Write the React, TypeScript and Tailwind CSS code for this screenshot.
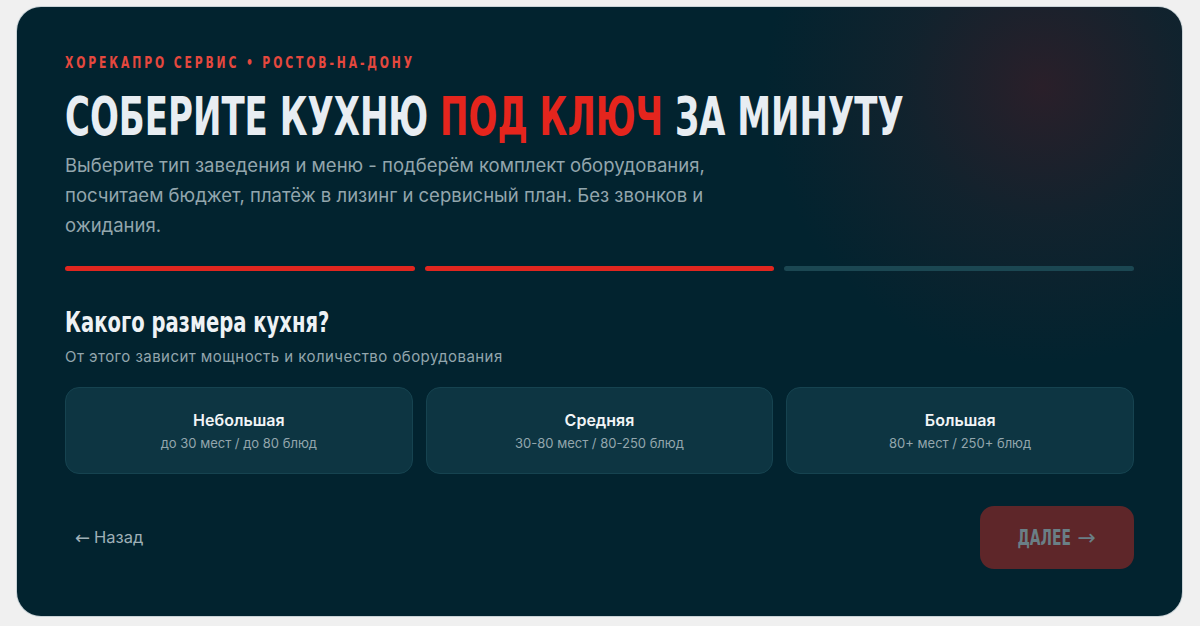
import { useState } from "react";

const sizes = [
  { title: "Небольшая", note: "до 30 мест / до 80 блюд" },
  { title: "Средняя", note: "30-80 мест / 80-250 блюд" },
  { title: "Большая", note: "80+ мест / 250+ блюд" },
];

const display = "font-['DejaVu_Sans_Condensed','Liberation_Sans_Narrow',sans-serif] font-bold";

export default function App() {
  const [selected, setSelected] = useState<number | null>(null);

  return (
    <main className="min-h-screen bg-[#f0f0f0] pl-[17px] pr-[18px] pt-[7px] pb-[10px] font-['Inter','Noto_Sans',sans-serif]">
      <section className="relative h-[609px] overflow-hidden rounded-[24px] bg-[#02232f] px-12 pt-12 shadow-[0_0_0_1px_#c9d2d6]">
        <div className="pointer-events-none absolute -right-[140px] -top-[200px] h-[560px] w-[560px] rounded-full bg-[radial-gradient(circle,rgba(52,30,40,0.8)_0%,rgba(32,34,44,0.5)_35%,rgba(2,35,47,0)_70%)]" />

        <div className="relative">
          <p className={`${display} origin-left scale-x-[0.75] whitespace-nowrap text-[16px] leading-4 tracking-[0.24em] text-[#e5483e]`}>
            ХОРЕКАПРО СЕРВИС • РОСТОВ-НА-ДОНУ
          </p>

          <h1 className={`${display} mt-[19px] origin-left scale-x-[0.7] whitespace-nowrap text-[54px] leading-none text-[#e8edf2]`}>
            СОБЕРИТЕ КУХНЮ <span className="text-[#e5251d]">ПОД КЛЮЧ</span> ЗА МИНУТУ
          </h1>

          <p className="mt-[6px] max-w-[690px] text-[18.5px] leading-[30px] text-[#93a6ad]">
            Выберите тип заведения и меню - подберём комплект оборудования, посчитаем бюджет,
            платёж в лизинг и сервисный план. Без звонков и ожидания.
          </p>

          <div className="mt-[26px] grid grid-cols-3 gap-[10px]">
            <div className="h-[5px] rounded-full bg-[#e0261f]" />
            <div className="h-[5px] rounded-full bg-[#e0261f]" />
            <div className="h-[5px] rounded-full bg-[#1b4752]" />
          </div>

          <h2 className={`${display} mt-[37px] origin-left scale-x-[0.75] whitespace-nowrap text-[29px] leading-none text-[#eef2f5]`}>
            Какого размера кухня?
          </h2>
          <p className="mt-[9px] text-[15px] leading-[22px] tracking-[0.03em] text-[#93a6ad]">
            От этого зависит мощность и количество оборудования
          </p>

          <div className="mt-[19px] grid grid-cols-3 gap-[13px]">
            {sizes.map((size, index) => (
              <button
                key={size.title}
                type="button"
                onClick={() => setSelected(index)}
                className={`flex h-[87px] flex-col items-center justify-center rounded-[14px] border text-center ${
                  selected === index ? "border-[#e0261f] bg-[#123d4a]" : "border-[#164350] bg-[#0d3542]"
                }`}
              >
                <span className="text-[16px] font-semibold leading-5 text-[#f1f4f6]">{size.title}</span>
                <span className="mt-[5px] text-[13px] leading-4 text-[#93a6ad]">{size.note}</span>
              </button>
            ))}
          </div>

          <div className="mt-[32px] flex items-center justify-between">
            <button type="button" className="ml-[10px] flex items-center gap-[4px] text-[16.5px] text-[#9fb0b7]">
              <span className="font-['DejaVu_Sans',sans-serif] text-[18px] leading-none">←</span>
              Назад
            </button>
            <button
              type="button"
              disabled={selected === null}
              className="flex h-[63px] w-[154px] items-center justify-center rounded-[14px] bg-[#5e2629] pr-[12px] text-[#6a7f86]"
            >
              <span className={`${display} origin-center scale-x-[0.7] text-[22px] leading-none`}>ДАЛЕЕ</span>
              <span className="-ml-[5px] font-['DejaVu_Sans',sans-serif] text-[22px] leading-none">→</span>
            </button>
          </div>
        </div>
      </section>
    </main>
  );
}
